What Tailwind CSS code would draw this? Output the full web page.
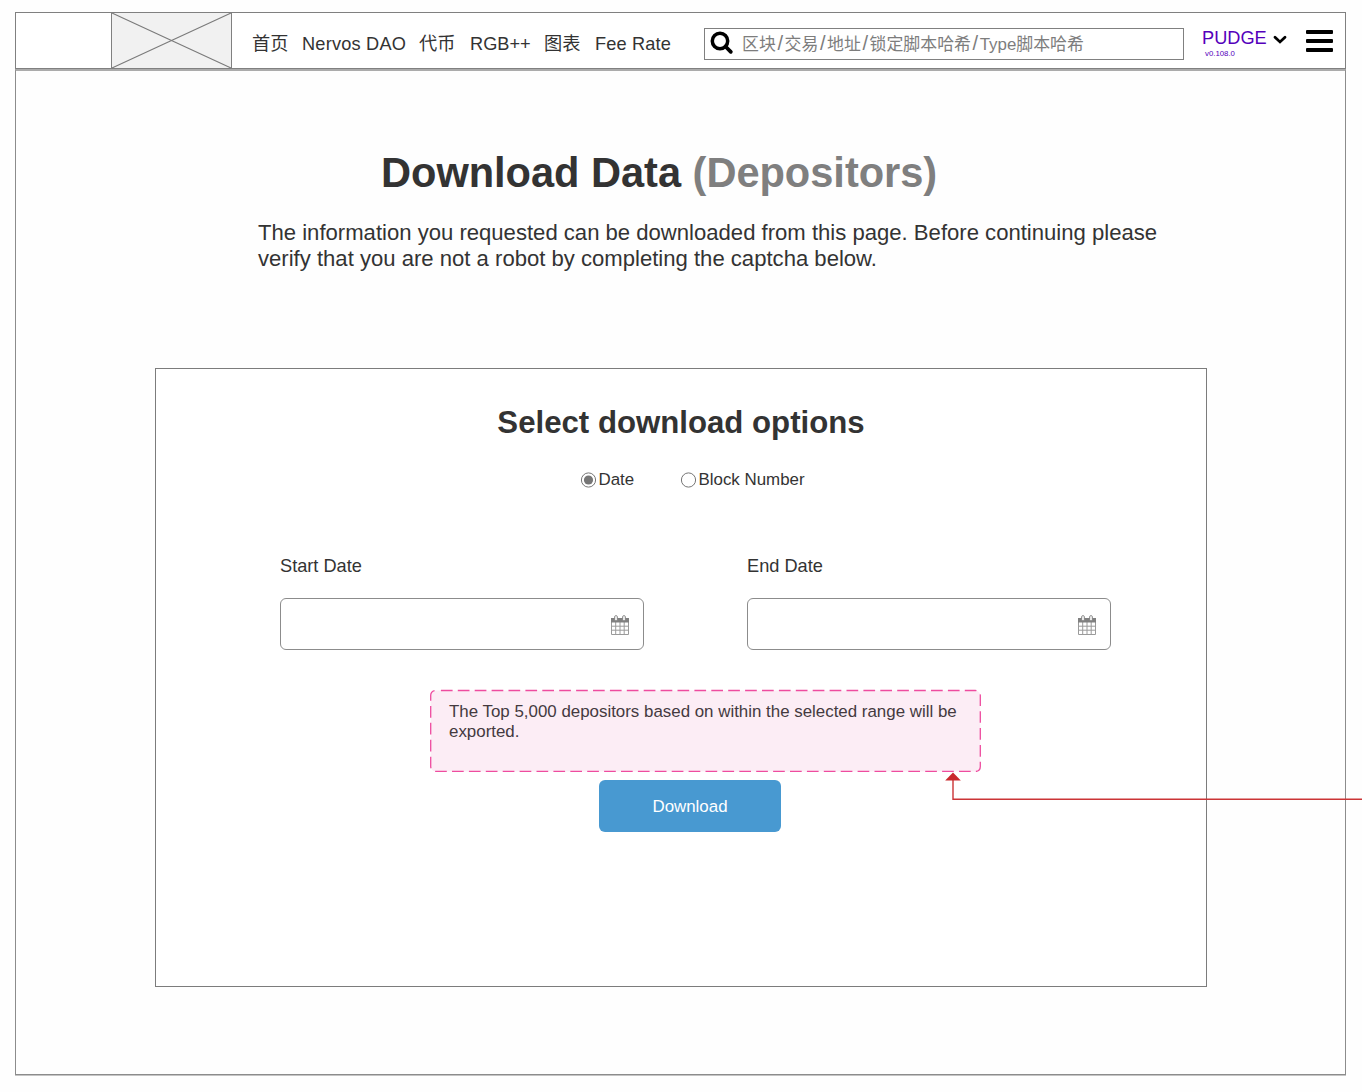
<!DOCTYPE html>
<html lang="zh">
<head>
<meta charset="utf-8">
<title>Download Data</title>
<script src="https://cdn.jsdelivr.net/npm/@tailwindcss/browser@4"></script>
</head>
<body class="bg-[#fefefe] w-[1362px] h-[1092px] overflow-hidden pt-[12px] pl-[15px] text-[#333] font-['Liberation_Sans','Noto_Sans_CJK_SC',sans-serif]">
<div class="w-[1331px]">
  <header class="h-[57px] border border-[#808080] bg-white flex whitespace-nowrap">
    <svg class="ml-[95px] w-[121px] h-[56px] shrink-0" viewBox="0 0 121 56">
      <rect x="0.5" y="-0.5" width="120" height="56" fill="#f1f1f1" stroke="#808080"/>
      <path d="M1 0L120 55M1 55L120 0" stroke="#7a7a7a" stroke-width="1.1"/>
    </svg>
    <nav class="flex items-center ml-[20px] h-[63px] text-[18.2px] w-[452px] shrink-0">
      <span class="w-[50px]">首页</span><span class="w-[117px] tracking-[0.2px]">Nervos DAO</span><span class="w-[51px]">代币</span><span class="w-[74px]">RGB++</span><span class="w-[51px]">图表</span><span class="tracking-[0.15px]">Fee Rate</span>
    </nav>
    <div class="w-[480px] h-[32px] mt-[15px] shrink-0 border border-[#808080] flex items-center text-[16.9px] text-[#7d7d7d]">
      <svg class="w-[24px] h-[24px] ml-[5px] mr-[8px] -mt-[2px]" viewBox="0 0 24 24" fill="none" stroke="#000"><circle cx="10" cy="10" r="7.7" stroke-width="3.5"/><path d="M15.5 15.5L20.8 20.8" stroke-width="3.8" stroke-linecap="round"/></svg>
      <span class="mt-[2px] leading-[24px]">区块<i class="not-italic text-[20px] leading-none mx-[1.6px]">/</i>交易<i class="not-italic text-[20px] leading-none mx-[1.6px]">/</i>地址<i class="not-italic text-[20px] leading-none mx-[1.6px]">/</i>锁定脚本哈希<i class="not-italic text-[20px] leading-none mx-[1.6px]">/</i>Type脚本哈希</span>
    </div>
    <div class="ml-[18px] pt-[14px] w-[72px] text-[#5500bb]">
      <div class="text-[18.2px] leading-[22px]">PUDGE</div>
      <div class="text-[7.8px] leading-[9px] ml-[3px]">v0.108.0</div>
    </div>
    <svg class="w-[14px] h-[10px] mt-[22px] -ml-px" viewBox="0 0 14 10" fill="none" stroke="#000" stroke-width="2.8" stroke-linecap="round"><path d="M2 2.2L7 6.9L12 2.2"/></svg>
    <div class="ml-[19px] mt-[17px] w-[27px] flex flex-col gap-[5px]">
      <div class="h-[4px] bg-black rounded-[1px]"></div><div class="h-[4px] bg-black rounded-[1px]"></div><div class="h-[4px] bg-black rounded-[1px]"></div>
    </div>
  </header>
  <main class="h-[1006px] border border-t-2 border-[#8c8c8c] border-t-[#ababab] shadow-[0_1px_0_#c4c4c4] flex flex-col">
    <h1 class="ml-[365px] mt-[78px] text-[41.6px] leading-[48px] font-bold whitespace-nowrap tracking-[-0.03px]">Download Data <span class="text-[#7f7f7f]">(Depositors)</span></h1>
    <p class="ml-[242px] mt-[23px] text-[22.1px] leading-[26px] whitespace-nowrap">The information you requested can be downloaded from this page. Before continuing please<br>verify that you are not a robot by completing the captcha below.</p>
    <section class="relative ml-[139px] mt-[96px] w-[1052px] h-[619px] border border-[#7c7c7c] bg-white">
      <h2 class="mt-[36px] text-center text-[31.2px] leading-[36px] font-bold">Select download options</h2>
      <div class="flex mt-[29px] ml-[424px] text-[16.9px] leading-[20px] whitespace-nowrap">
        <div class="flex w-[100px]"><svg class="w-[16px] h-[16px] mt-[2px] mr-[2.5px]" viewBox="0 0 16 16"><circle cx="8.5" cy="8" r="7.1" fill="#fff" stroke="#767676"/><circle cx="8.5" cy="8" r="4.6" fill="#767676"/></svg>Date</div>
        <div class="flex"><svg class="w-[16px] h-[16px] mt-[2px] mr-[2.5px]" viewBox="0 0 16 16"><circle cx="8.5" cy="8" r="7.1" fill="#fff" stroke="#767676"/></svg>Block Number</div>
      </div>
      <div class="flex ml-[124px] mt-[65px] gap-[103px] text-[18.2px] leading-[22px]">
        <div class="w-[364px]">
          <div>Start Date</div>
          <div class="mt-[21px] h-[52px] border border-[#8c8c8c] rounded-[6px] flex justify-end pr-[14px] pt-[16px]">
            <svg class="w-[18px] h-[20px]" viewBox="0 0 18 20"><path d="M.5 3V19.5H17.5V3M1 11.2H17M1 15.2H17M4.7 7V19M9 7V19M13.2 7V19" fill="none" stroke="#9a9a9a"/><path d="M0 3H18V7.5H0Z" fill="#808080"/><rect x="3.7" y=".7" width="2.6" height="5" rx="1" fill="#fff" stroke="#808080"/><rect x="11.7" y=".7" width="2.6" height="5" rx="1" fill="#fff" stroke="#808080"/></svg>
          </div>
        </div>
        <div class="w-[364px]">
          <div>End Date</div>
          <div class="mt-[21px] h-[52px] border border-[#8c8c8c] rounded-[6px] flex justify-end pr-[14px] pt-[16px]">
            <svg class="w-[18px] h-[20px]" viewBox="0 0 18 20"><path d="M.5 3V19.5H17.5V3M1 11.2H17M1 15.2H17M4.7 7V19M9 7V19M13.2 7V19" fill="none" stroke="#9a9a9a"/><path d="M0 3H18V7.5H0Z" fill="#808080"/><rect x="3.7" y=".7" width="2.6" height="5" rx="1" fill="#fff" stroke="#808080"/><rect x="11.7" y=".7" width="2.6" height="5" rx="1" fill="#fff" stroke="#808080"/></svg>
          </div>
        </div>
      </div>
      <div class="relative ml-[274px] mt-[39px] w-[552px] h-[83px] pl-[19px] pt-[13px] text-[16.9px] leading-[20px] text-[#443a3f] whitespace-nowrap">
        <svg class="absolute left-0 top-0 w-[552px] h-[83px]" viewBox="0 0 552 83"><rect x=".7" y="1.5" width="549.6" height="81" rx="5" fill="#fcedf5" stroke="#ee4c9f" stroke-width="1.3" stroke-dasharray="11.7 5.2" stroke-dashoffset="-5.2"/></svg>
        <div class="relative">The Top 5,000 depositors based on within the selected range will be<br>exported.</div>
      </div>
      <button class="block ml-[443px] mt-[8px] w-[182px] h-[52px] rounded-[6px] bg-[#4899d1] text-white text-[16.9px] pt-[2px]">Download</button>
      <svg class="absolute left-[786px] top-[402px] w-[420px] h-[32px]" viewBox="0 0 420 32"><path d="M11 6V28.3H420" fill="none" stroke="#cb3436" stroke-width="1.4"/><path d="M11 1.5L18.8 9.5H3.2Z" fill="#c9282d"/></svg>
    </section>
  </main>
</div>
</body>
</html>
